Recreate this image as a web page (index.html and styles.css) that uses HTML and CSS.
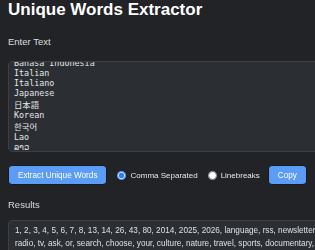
FILE: index.html
```html
<!DOCTYPE html>
<html lang="en">
<head>
    <meta charset="UTF-8">
    <meta name="viewport" content="width=device-width, initial-scale=1.0">
    <title>Unique Words Extractor</title>
    <link rel="stylesheet" href="styles.css">
</head>
<body>
    <div class="app">
        <h1 class="title">Unique Words Extractor</h1>

        <label class="label" for="input-text">Enter Text</label>
        <textarea id="input-text" class="input" spellcheck="false">Hungarian
Magyar
Indonesian
Bahasa Indonesia
Italian
Italiano
Japanese
日本語
Korean
한국어
Lao
ລາວ
Malay
Bahasa Melayu
Norwegian
Norsk
Polish
Polski</textarea>

        <div class="controls">
            <button class="btn" id="extract">Extract Unique Words</button>
            <label class="option"><input type="radio" name="separator" value="comma" checked> Comma Separated</label>
            <label class="option"><input type="radio" name="separator" value="lines"> Linebreaks</label>
            <button class="btn" id="copy">Copy</button>
        </div>

        <h2 class="label">Results</h2>
        <div class="results" id="results">1, 2, 3, 4, 5, 6, 7, 8, 13, 14, 26, 43, 80, 2014, 2025, 2026, language, rss, newsletter, podcast, music, radio, tv, ask, or, search, choose, your, culture, nature, travel, sports, documentary, news, weather, science, history</div>
    </div>

    <script>
        document.getElementById('input-text').scrollTop = 39;
    </script>
</body>
</html>
```

FILE: styles.css
```css
* { box-sizing: border-box; }
html, body {
    margin: 0;
    overflow: hidden;
}
body {
    background-color: #212327;
    color: #dcdcdc;
    font-family: 'Liberation Sans', Arial, sans-serif;
}
.app {
    width: 410px;
    padding: 0 8px;
    display: flex;
    flex-direction: column;
    align-items: flex-start;
}
.title {
    margin: 0;
    font-size: 17px;
    line-height: 20px;
    font-weight: bold;
    color: #ffffff;
}
.label {
    display: block;
    margin: 16px 0 0;
    font-size: 9.5px;
    line-height: 11px;
    font-weight: normal;
    color: #dcdcdc;
}
.input {
    display: block;
    width: 100%;
    height: 91px;
    margin-top: 14px;
    padding: 5px;
    background-color: #2b2e33;
    color: #e6e6e6;
    border: 1px solid #3c3f45;
    border-radius: 4px;
    font-family: 'DejaVu Sans Mono', 'Noto Sans CJK JP', monospace;
    font-size: 8.4px;
    resize: vertical;
    outline: none;
}
.controls {
    display: flex;
    align-items: center;
    margin-top: 13px;
    height: 20px;
}
.btn {
    height: 20px;
    padding: 0 9px;
    background-color: #5b9cf6;
    color: #ffffff;
    border: 1px solid #18191c;
    border-radius: 4px;
    font-family: 'Liberation Sans', Arial, sans-serif;
    font-size: 8.2px;
    cursor: pointer;
}
.option {
    display: flex;
    align-items: center;
    gap: 4px;
    margin-left: 10px;
    font-size: 8px;
    color: #e6e6e6;
}
.option + .btn {
    margin-left: 8px;
}
.option input {
    width: 9px;
    height: 9px;
    margin: 0;
    accent-color: #2f7cf6;
}
.controls + .label {
    margin-top: 14px;
}
.results {
    width: 100%;
    height: 60px;
    margin-top: 10px;
    padding: 4px 6px;
    background-color: #2b2e33;
    border: 1px solid #3c3f45;
    border-radius: 4px;
    font-size: 8.2px;
    line-height: 12.8px;
    color: #e0e0e0;
}
```
